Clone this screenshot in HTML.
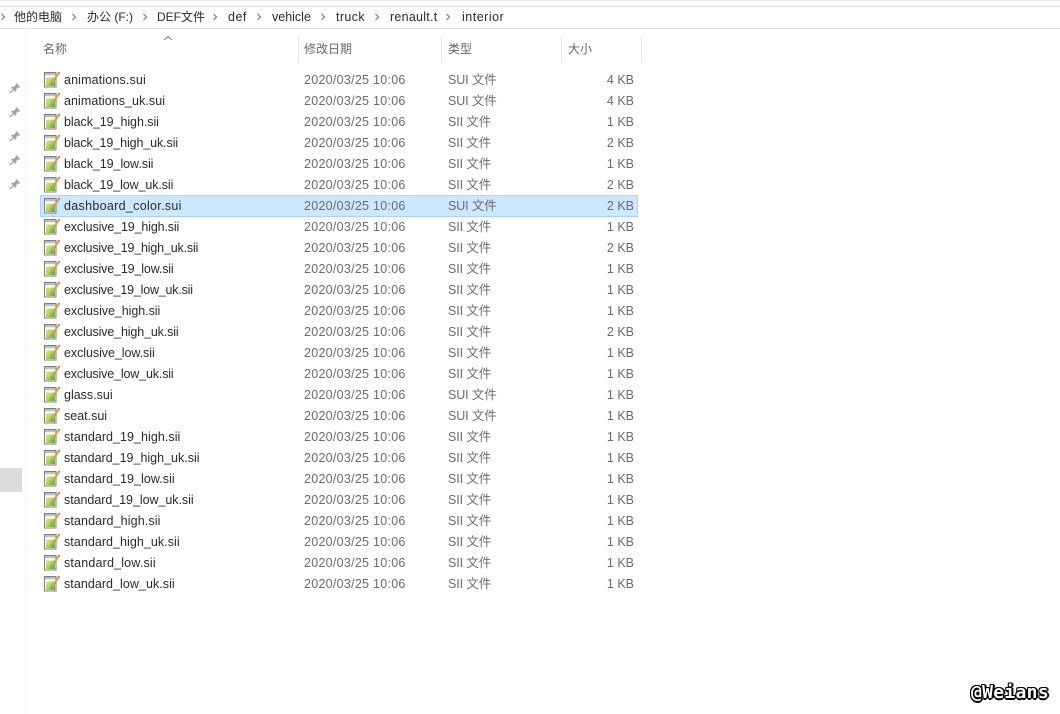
<!DOCTYPE html>
<html><head><meta charset="utf-8">
<style>
html,body{margin:0;padding:0;background:#fff}
#p{position:relative;width:1060px;height:714px;overflow:hidden;background:#fff;font-family:"Liberation Sans","Noto Sans CJK SC",sans-serif;font-size:12.5px}
#p div,#p svg{position:absolute}
.t{white-space:nowrap;line-height:16px}
.c{color:#2a2a2a;font-size:12.5px;top:9px}
.h{color:#666;top:41px;font-size:12px}
.l{top:36px;width:1px;height:27px;background:#e6e8ea}
.r{left:0;width:660px;height:21px}
.r div{top:3px;line-height:16px;white-space:nowrap}
.n{left:64px;color:#2a2a2a}
.d{left:304px;color:#6b6b6b;letter-spacing:.27px}
.y{left:448px;color:#6b6b6b;letter-spacing:-.1px}
.s{left:560px;width:74px;text-align:right;color:#6b6b6b}
.r svg{left:43px;top:2px}
.m{left:9px}
#wm{left:971px;top:682px;font:bold 18px "DejaVu Sans Mono",monospace;letter-spacing:.3px;color:#fff;text-shadow:1px 0 #000,-1px 0 #000,0 1px #000,0 -1px #000,1px 1px #000,-1px -1px #000,1px -1px #000,-1px 1px #000,2px 0 #000,0 2px #000;white-space:nowrap}
</style></head><body>
<div id="p">
<svg width="0" height="0" style="left:0;top:0"><defs>
<linearGradient id="g" x1="0" y1="0" x2="1" y2="1"><stop offset="0" stop-color="#d9e98f"/><stop offset=".55" stop-color="#a9d05a"/><stop offset="1" stop-color="#4f9e46"/></linearGradient>
<symbol id="f" viewBox="0 0 18 17">
<path d="M1.5 1.5h11.5v14.5H1.5z" fill="#fff" stroke="#7d7d7d" stroke-width="1"/>
<path d="M2 2h10.5v2.5H2z" fill="#dcdcdc"/>
<path d="M3 2v2M5 2v2M7 2v2M9 2v2M11 2v2" stroke="#8a8a8a" stroke-width=".7"/>
<path d="M3 6.5h9V15H3z" fill="url(#g)"/>
<path d="M8.5 11L15.3 1.6l1.2.9-6.8 9.4-1.8.9z" fill="#e8b84a" stroke="#94682a" stroke-width=".4"/>
<path d="M15.3 1.6l1.2.9.6-.9-1.2-.9z" fill="#a8443a"/>
</symbol>
<symbol id="a" viewBox="0 0 6 8"><path d="M1.5 1L4.5 4 1.5 7" fill="none" stroke="#8a8a8a" stroke-width="1.3"/></symbol>
<symbol id="pin" viewBox="0 0 12 12"><path d="M7 .8L11.2 5 10.2 5.7 9.2 5.2 7.2 7.2 7.2 9.2 6.2 9.8 2.3 5.8 3 4.8 5 4.8 7 2.8 6.5 1.8z" fill="#9aa2a7"/><path d="M4 8L1 11" stroke="#9aa2a7" stroke-width="1.3"/></symbol>
</defs></svg>

<div style="left:0;top:0;width:1060px;height:1px;background:#ececec"></div>
<div style="left:0;top:6px;width:1060px;height:1px;background:#dcdcdc"></div>
<div style="left:0;top:28px;width:1060px;height:1px;background:#dfdfdf"></div>

<div style="left:0;top:7px;width:1060px;height:21px">
<svg width="6" height="8" style="left:0;top:6px"><use href="#a"/></svg>
<svg width="6" height="8" style="left:71px;top:6px"><use href="#a"/></svg>
<svg width="6" height="8" style="left:142px;top:6px"><use href="#a"/></svg>
<svg width="6" height="8" style="left:212px;top:6px"><use href="#a"/></svg>
<svg width="6" height="8" style="left:256px;top:6px"><use href="#a"/></svg>
<svg width="6" height="8" style="left:320px;top:6px"><use href="#a"/></svg>
<svg width="6" height="8" style="left:374px;top:6px"><use href="#a"/></svg>
<svg width="6" height="8" style="left:445px;top:6px"><use href="#a"/></svg>
</div>
<div class="t c" style="left:14px;font-size:12px">他的电脑</div>
<div class="t c" style="left:87px;font-size:12px">办公 (F:)</div>
<div class="t c" style="left:157px;font-size:12px">DEF文件</div>
<div class="t c" style="left:228px;letter-spacing:.5px">def</div>
<div class="t c" style="left:272px">vehicle</div>
<div class="t c" style="left:336px;letter-spacing:.4px">truck</div>
<div class="t c" style="left:390px;letter-spacing:.25px">renault.t</div>
<div class="t c" style="left:462px;letter-spacing:.5px">interior</div>

<svg width="10" height="6" style="left:163px;top:35px"><path d="M1 5L5 1.5 9 5" fill="none" stroke="#777" stroke-width="1"/></svg>
<div class="t h" style="left:43px">名称</div>
<div class="t h" style="left:304px">修改日期</div>
<div class="t h" style="left:448px">类型</div>
<div class="t h" style="left:568px">大小</div>
<div class="l" style="left:298px"></div>
<div class="l" style="left:441px"></div>
<div class="l" style="left:561px"></div>
<div class="l" style="left:641px"></div>

<div style="left:25px;top:29px;width:1px;height:685px;background:#f3f3f3"></div>
<svg width="12" height="12" class="m" style="top:82px"><use href="#pin"/></svg>
<svg width="12" height="12" class="m" style="top:106px"><use href="#pin"/></svg>
<svg width="12" height="12" class="m" style="top:130px"><use href="#pin"/></svg>
<svg width="12" height="12" class="m" style="top:154px"><use href="#pin"/></svg>
<svg width="12" height="12" class="m" style="top:178px"><use href="#pin"/></svg>
<div style="left:0;top:468px;width:22px;height:24px;background:#dcdcdc"></div>

<div style="left:40px;top:195px;width:596px;height:20px;background:#cce8ff;border:1px solid #a5d6f7"></div>

<div class="r" style="top:69px"><svg width="18" height="17"><use href="#f"/></svg><div class="n" style="letter-spacing:.14px">animations.sui</div><div class="d">2020/03/25 10:06</div><div class="y">SUI 文件</div><div class="s">4 KB</div></div>
<div class="r" style="top:90px"><svg width="18" height="17"><use href="#f"/></svg><div class="n" style="letter-spacing:.06px">animations_uk.sui</div><div class="d">2020/03/25 10:06</div><div class="y">SUI 文件</div><div class="s">4 KB</div></div>
<div class="r" style="top:111px"><svg width="18" height="17"><use href="#f"/></svg><div class="n" style="letter-spacing:-.06px">black_19_high.sii</div><div class="d">2020/03/25 10:06</div><div class="y">SII 文件</div><div class="s">1 KB</div></div>
<div class="r" style="top:132px"><svg width="18" height="17"><use href="#f"/></svg><div class="n" style="letter-spacing:-.1px">black_19_high_uk.sii</div><div class="d">2020/03/25 10:06</div><div class="y">SII 文件</div><div class="s">2 KB</div></div>
<div class="r" style="top:153px"><svg width="18" height="17"><use href="#f"/></svg><div class="n" style="letter-spacing:-.06px">black_19_low.sii</div><div class="d">2020/03/25 10:06</div><div class="y">SII 文件</div><div class="s">1 KB</div></div>
<div class="r" style="top:174px"><svg width="18" height="17"><use href="#f"/></svg><div class="n" style="letter-spacing:-.1px">black_19_low_uk.sii</div><div class="d">2020/03/25 10:06</div><div class="y">SII 文件</div><div class="s">2 KB</div></div>
<div class="r" style="top:195px"><svg width="18" height="17"><use href="#f"/></svg><div class="n" style="letter-spacing:.31px">dashboard_color.sui</div><div class="d">2020/03/25 10:06</div><div class="y">SUI 文件</div><div class="s">2 KB</div></div>
<div class="r" style="top:216px"><svg width="18" height="17"><use href="#f"/></svg><div class="n" style="letter-spacing:-.14px">exclusive_19_high.sii</div><div class="d">2020/03/25 10:06</div><div class="y">SII 文件</div><div class="s">1 KB</div></div>
<div class="r" style="top:237px"><svg width="18" height="17"><use href="#f"/></svg><div class="n" style="letter-spacing:-.17px">exclusive_19_high_uk.sii</div><div class="d">2020/03/25 10:06</div><div class="y">SII 文件</div><div class="s">2 KB</div></div>
<div class="r" style="top:258px"><svg width="18" height="17"><use href="#f"/></svg><div class="n" style="letter-spacing:-.15px">exclusive_19_low.sii</div><div class="d">2020/03/25 10:06</div><div class="y">SII 文件</div><div class="s">1 KB</div></div>
<div class="r" style="top:279px"><svg width="18" height="17"><use href="#f"/></svg><div class="n" style="letter-spacing:-.2px">exclusive_19_low_uk.sii</div><div class="d">2020/03/25 10:06</div><div class="y">SII 文件</div><div class="s">1 KB</div></div>
<div class="r" style="top:300px"><svg width="18" height="17"><use href="#f"/></svg><div class="n" style="letter-spacing:-.06px">exclusive_high.sii</div><div class="d">2020/03/25 10:06</div><div class="y">SII 文件</div><div class="s">1 KB</div></div>
<div class="r" style="top:321px"><svg width="18" height="17"><use href="#f"/></svg><div class="n" style="letter-spacing:-.14px">exclusive_high_uk.sii</div><div class="d">2020/03/25 10:06</div><div class="y">SII 文件</div><div class="s">2 KB</div></div>
<div class="r" style="top:342px"><svg width="18" height="17"><use href="#f"/></svg><div class="n" style="letter-spacing:-.06px">exclusive_low.sii</div><div class="d">2020/03/25 10:06</div><div class="y">SII 文件</div><div class="s">1 KB</div></div>
<div class="r" style="top:363px"><svg width="18" height="17"><use href="#f"/></svg><div class="n" style="letter-spacing:-.15px">exclusive_low_uk.sii</div><div class="d">2020/03/25 10:06</div><div class="y">SII 文件</div><div class="s">1 KB</div></div>
<div class="r" style="top:384px"><svg width="18" height="17"><use href="#f"/></svg><div class="n">glass.sui</div><div class="d">2020/03/25 10:06</div><div class="y">SUI 文件</div><div class="s">1 KB</div></div>
<div class="r" style="top:405px"><svg width="18" height="17"><use href="#f"/></svg><div class="n">seat.sui</div><div class="d">2020/03/25 10:06</div><div class="y">SUI 文件</div><div class="s">1 KB</div></div>
<div class="r" style="top:426px"><svg width="18" height="17"><use href="#f"/></svg><div class="n" style="letter-spacing:.05px">standard_19_high.sii</div><div class="d">2020/03/25 10:06</div><div class="y">SII 文件</div><div class="s">1 KB</div></div>
<div class="r" style="top:447px"><svg width="18" height="17"><use href="#f"/></svg><div class="n">standard_19_high_uk.sii</div><div class="d">2020/03/25 10:06</div><div class="y">SII 文件</div><div class="s">1 KB</div></div>
<div class="r" style="top:468px"><svg width="18" height="17"><use href="#f"/></svg><div class="n" style="letter-spacing:.05px">standard_19_low.sii</div><div class="d">2020/03/25 10:06</div><div class="y">SII 文件</div><div class="s">1 KB</div></div>
<div class="r" style="top:489px"><svg width="18" height="17"><use href="#f"/></svg><div class="n" style="letter-spacing:-.05px">standard_19_low_uk.sii</div><div class="d">2020/03/25 10:06</div><div class="y">SII 文件</div><div class="s">1 KB</div></div>
<div class="r" style="top:510px"><svg width="18" height="17"><use href="#f"/></svg><div class="n" style="letter-spacing:.12px">standard_high.sii</div><div class="d">2020/03/25 10:06</div><div class="y">SII 文件</div><div class="s">1 KB</div></div>
<div class="r" style="top:531px"><svg width="18" height="17"><use href="#f"/></svg><div class="n" style="letter-spacing:.05px">standard_high_uk.sii</div><div class="d">2020/03/25 10:06</div><div class="y">SII 文件</div><div class="s">1 KB</div></div>
<div class="r" style="top:552px"><svg width="18" height="17"><use href="#f"/></svg><div class="n" style="letter-spacing:.18px">standard_low.sii</div><div class="d">2020/03/25 10:06</div><div class="y">SII 文件</div><div class="s">1 KB</div></div>
<div class="r" style="top:573px"><svg width="18" height="17"><use href="#f"/></svg><div class="n" style="letter-spacing:.05px">standard_low_uk.sii</div><div class="d">2020/03/25 10:06</div><div class="y">SII 文件</div><div class="s">1 KB</div></div>

<div id="wm">@Weians</div>
</div>
</body></html>
